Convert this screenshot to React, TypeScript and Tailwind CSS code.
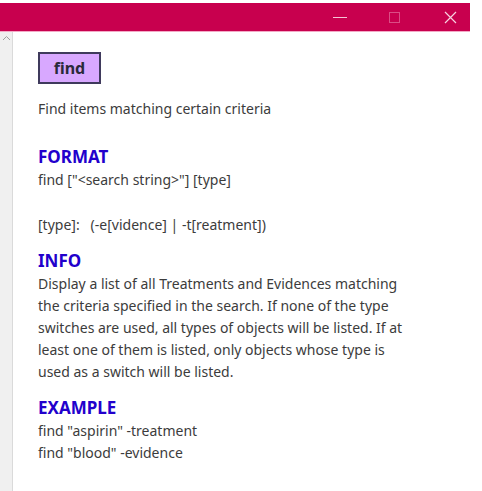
import React from 'react';

const font = { fontFamily: '"Noto Sans", "Open Sans", Arial, sans-serif' };

function TitleBar() {
  return (
    <div className="mt-[3px] flex h-[29px] w-[470px] items-center justify-end border-b border-[#f3a9c6] bg-[#c8004e]">
      <div className="flex h-full w-[36px] items-center justify-center">
        <div className="h-px w-[14px] bg-[#f5c3d6]" />
      </div>
      <div className="flex h-full w-[72px] items-center justify-center">
        <div className="h-[11px] w-[11px] border border-[#db4d85]" />
      </div>
      <div className="flex h-full w-[40px] items-center justify-center">
        <svg width="13" height="13" viewBox="0 0 13 13">
          <path d="M1 1 L12 12 M12 1 L1 12" stroke="#f7d0df" strokeWidth="1.2" />
        </svg>
      </div>
    </div>
  );
}

function Section({ title, children }: { title: string; children: React.ReactNode }) {
  return (
    <div className="mt-[13px]">
      <div className="text-[17px] font-bold leading-[24px] text-[#2200cc]">{title}</div>
      {children}
    </div>
  );
}

export default function App() {
  return (
    <div className="h-[491px] w-[482px] overflow-hidden bg-white" style={font}>
      <TitleBar />
      <div className="flex h-[459px] w-[470px]">
        {/* scrollbar */}
        <div className="flex w-[13px] flex-col items-center border-r border-[#dadada] bg-[#f0f0f0] pt-[3px]">
          <svg width="9" height="6" viewBox="0 0 9 6">
            <path d="M1 5 L4.5 1.5 L8 5" fill="none" stroke="#a0a0a0" strokeWidth="1" />
          </svg>
        </div>

        <div className="flex-1 pl-[25px] pt-[20px] text-[14px] leading-[22px] text-[#3c3c3c]">
          <div className="inline-flex h-[32px] w-[63px] items-center justify-center border-2 border-[#3f3a5c] bg-[#d8a8ff] text-[16px] font-bold text-[#2a2a3a]">
            find
          </div>
          <div className="mt-[14px]">Find items matching certain criteria</div>

          <div className="mt-[25px]">
            <div className="text-[17px] font-bold leading-[24px] text-[#2200cc]">FORMAT</div>
            <div>find ["&lt;search string&gt;"] [type]</div>
            <div className="mt-[23px] whitespace-pre">[type]:   (-e[vidence] | -t[reatment])</div>
          </div>

          <Section title="INFO">
            <div className="w-[378px]">
              Display a list of all Treatments and Evidences matching the criteria specified in the search.
              If none of the type switches are used, all types of objects will be listed. If at least one of
              them is listed, only objects whose type is used as a switch will be listed.
            </div>
          </Section>

          <Section title="EXAMPLE">
            <div>find "aspirin" -treatment</div>
            <div>find "blood" -evidence</div>
          </Section>
        </div>
      </div>
    </div>
  );
}
